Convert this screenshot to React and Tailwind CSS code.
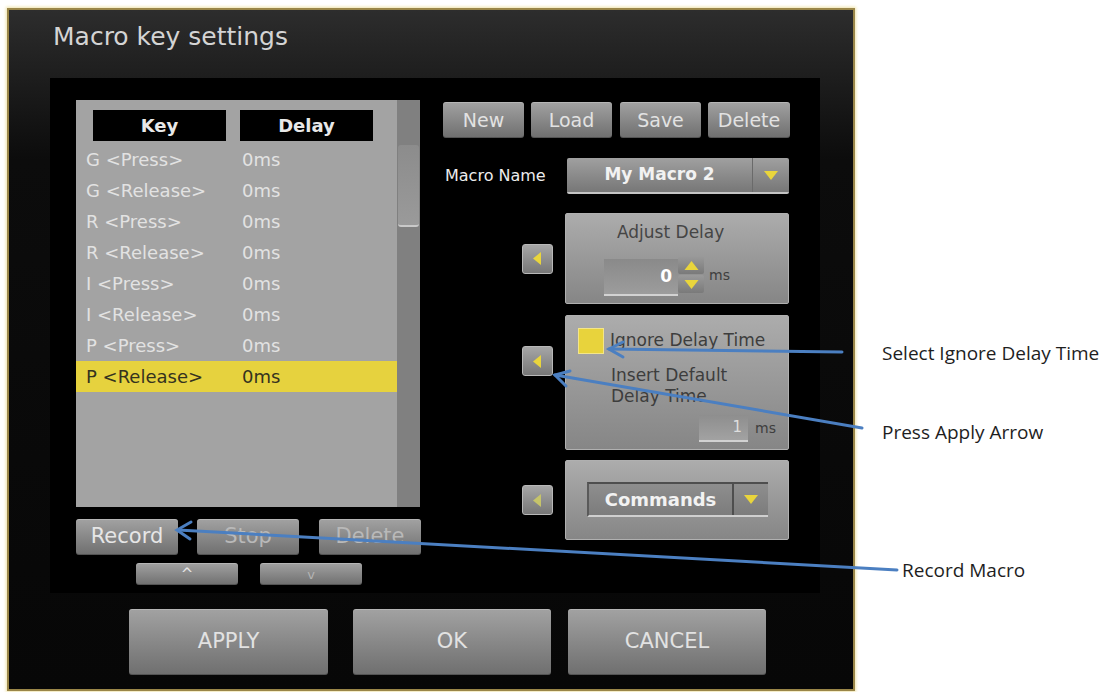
import React from "react";

const btn =
  "flex items-center justify-center rounded-[3px] bg-linear-to-b from-[#a2a2a2] to-[#6f6f6f] shadow-[inset_0_1px_0_rgba(255,255,255,0.22),inset_0_-1px_0_rgba(0,0,0,0.25)]";
const panel =
  "rounded-[2px] border border-[#b0b0b0] bg-linear-to-b from-[#acacac] to-[#868686]";

function TriLeft({ color = "#e9d53c" }) {
  return (
    <svg width="9" height="13" viewBox="0 0 9 13">
      <polygon points="8,0 8,13 0,6.5" fill={color} />
    </svg>
  );
}
function TriDown({ w = 14, h = 9 }) {
  return (
    <svg width={w} height={h} viewBox="0 0 14 9">
      <polygon points="0,0 14,0 7,9" fill="#e9d53c" />
    </svg>
  );
}
function TriUp({ w = 14, h = 9 }) {
  return (
    <svg width={w} height={h} viewBox="0 0 14 9">
      <polygon points="0,9 14,9 7,0" fill="#e9d53c" />
    </svg>
  );
}

function ArrowBtn({ dim, className = "" }) {
  return (
    <div
      className={`flex h-[30px] w-[31px] shrink-0 items-center justify-center rounded-[3px] border border-[#b8b8b8] bg-linear-to-b from-[#a6a6a6] to-[#777777] ${className}`}
    >
      <TriLeft color={dim ? "#c6c46a" : "#e9d53c"} />
    </div>
  );
}

const rows = [
  "G <Press>",
  "G <Release>",
  "R <Press>",
  "R <Release>",
  "I <Press>",
  "I <Release>",
  "P <Press>",
  "P <Release>",
];

export default function App() {
  return (
    <div className="relative flex h-[692px] w-[1112px] items-start overflow-hidden bg-white font-['DejaVu_Sans',sans-serif]">
      {/* Window */}
      <div className="ml-[7px] mt-[8px] flex h-[683px] w-[848px] shrink-0 flex-col border-2 border-[#9a8648] bg-linear-to-b from-[#2d2d2d] via-[#0c0c0c] via-[22%] to-[#070707] shadow-[0_0_3px_1px_#efe3a8]">
        <div className="h-[68px] shrink-0 pl-[44px] pt-[12px] text-[25px] leading-[30px] text-[#d4d4d4]">
          Macro key settings
        </div>

        {/* Black panel */}
        <div className="ml-[41px] flex h-[515px] w-[770px] shrink-0 bg-black">
          {/* Left column */}
          <div className="w-[371px] shrink-0 pl-[26px] pt-[22px]">
            <div className="flex h-[407px] w-[344px] bg-[#a3a3a3]">
              <div className="w-[321px] pt-[10px]">
                <div className="flex pl-[17px]">
                  <div className="flex h-[31px] w-[133px] items-center justify-center bg-black text-[18px] font-bold text-[#e8e8e8]">
                    Key
                  </div>
                  <div className="ml-[14px] flex h-[31px] w-[133px] items-center justify-center bg-black text-[18px] font-bold text-[#e8e8e8]">
                    Delay
                  </div>
                </div>
                <div className="mt-[3px]">
                  {rows.map((r, i) => {
                    const sel = i === rows.length - 1;
                    return (
                      <div
                        key={i}
                        className={`flex h-[31px] items-center text-[18px] ${
                          sel ? "bg-[#e6d23e] text-[#35331f]" : "text-[#e2e2e2]"
                        }`}
                      >
                        <span className="w-[166px] pl-[10px]">{r}</span>
                        <span>0ms</span>
                      </div>
                    );
                  })}
                </div>
              </div>
              <div className="w-[23px] bg-[#808080] px-[1px] pt-[45px]">
                <div className="h-[82px] rounded-[3px] border-b-2 border-[#c9c9c9] bg-linear-to-b from-[#8c8c8c] to-[#9a9a9a]" />
              </div>
            </div>

            <div className="mt-[12px] flex">
              <div className={`${btn} h-[36px] w-[102px] text-[21px] text-[#e6e6e6]`}>Record</div>
              <div className={`${btn} ml-[19px] h-[36px] w-[102px] text-[21px] text-[#b9b9b9]`}>Stop</div>
              <div className={`${btn} ml-[20px] h-[36px] w-[102px] text-[21px] text-[#b9b9b9]`}>Delete</div>
            </div>
            <div className="mt-[8px] flex pl-[60px]">
              <div className={`${btn} h-[22px] w-[102px] text-[15px] leading-none text-[#e6e6e6]`}>^</div>
              <div className={`${btn} ml-[22px] h-[22px] w-[102px] text-[13px] leading-none text-[#b4b4b4]`}>v</div>
            </div>
          </div>

          {/* Right column */}
          <div className="ml-[22px] w-[347px] shrink-0 pt-[24px]">
            <div className="flex">
              <div className={`${btn} h-[36px] w-[81px] text-[19px] text-[#e2e2e2]`}>New</div>
              <div className={`${btn} ml-[7px] h-[36px] w-[81px] text-[19px] text-[#e2e2e2]`}>Load</div>
              <div className={`${btn} ml-[8px] h-[36px] w-[81px] text-[19px] text-[#e2e2e2]`}>Save</div>
              <div className={`${btn} ml-[7px] h-[36px] w-[82px] text-[19px] text-[#e2e2e2]`}>Delete</div>
            </div>

            <div className="mt-[20px] flex h-[36px] items-center">
              <div className="w-[124px] shrink-0 pl-[2px] text-[16px] text-[#ececec]">Macro Name</div>
              <div className="flex h-[36px] w-[222px] shrink-0 rounded-[2px] border-b-2 border-[#c4c4c4] bg-linear-to-b from-[#a0a0a0] to-[#777777]">
                <div className="flex w-[185px] items-center justify-center text-[17px] font-bold text-[#f2f2f2]">
                  My Macro 2
                </div>
                <div className="w-px bg-[#6a6a6a]" />
                <div className="flex flex-1 items-center justify-center">
                  <TriDown w={14} h={9} />
                </div>
              </div>
            </div>

            {/* Adjust delay */}
            <div className="mt-[19px] flex items-center pl-[79px]">
              <ArrowBtn />
              <div className={`${panel} ml-[12px] h-[91px] w-[224px] shrink-0 pt-[8px]`}>
                <div className="pl-[51px] text-[17px] leading-[20px] text-[#454545]">Adjust Delay</div>
                <div className="mt-[14px] flex items-start pl-[38px]">
                  <div className="mt-[3px] flex h-[37px] w-[74px] items-center justify-end border-b-2 border-[#d2d2d2] bg-linear-to-b from-[#8a8a8a] to-[#9c9c9c] pr-[6px] text-[17px] font-bold text-white">
                    0
                  </div>
                  <div className="flex h-[37px] w-[26px] flex-col gap-[1px]">
                    <div className="flex h-[18px] items-center justify-center rounded-[2px] bg-linear-to-b from-[#9a9a9a] to-[#7a7a7a]">
                      <TriUp w={15} h={9} />
                    </div>
                    <div className="flex h-[18px] items-center justify-center rounded-[2px] bg-linear-to-b from-[#9a9a9a] to-[#7a7a7a]">
                      <TriDown w={15} h={9} />
                    </div>
                  </div>
                  <div className="ml-[5px] mt-[9px] text-[14px] text-[#3e3e3e]">ms</div>
                </div>
              </div>
            </div>

            {/* Ignore delay */}
            <div className="mt-[11px] flex items-start pl-[79px]">
              <ArrowBtn className="mt-[31px]" />
              <div className={`${panel} ml-[12px] h-[135px] w-[224px] shrink-0 pl-[12px] pt-[12px]`}>
                <div className="flex items-center">
                  <div className="h-[26px] w-[26px] border border-[#f3e58a] bg-[#e8d33c]" />
                  <div className="ml-[6px] text-[17px] text-[#3d3d3d]">Ignore Delay Time</div>
                </div>
                <div className="mt-[11px] pl-[33px] text-[17px] leading-[21px] text-[#3d3d3d]">
                  Insert Default
                  <br />
                  Delay Time
                </div>
                <div className="mt-[8px] flex items-center pl-[121px]">
                  <div className="flex h-[27px] w-[49px] items-center justify-end border-b-2 border-[#d2d2d2] bg-linear-to-b from-[#8e8e8e] to-[#a2a2a2] pr-[6px] text-[15px] text-[#dedede]">
                    1
                  </div>
                  <div className="ml-[7px] text-[14px] text-[#3e3e3e]">ms</div>
                </div>
              </div>
            </div>

            {/* Commands */}
            <div className="mt-[10px] flex items-center pl-[79px]">
              <ArrowBtn dim />
              <div className={`${panel} ml-[12px] h-[80px] w-[224px] shrink-0 pl-[21px] pt-[21px]`}>
                <div className="flex h-[35px] w-[181px] border-b-2 border-l-2 border-t-2 border-b-[#cfcfcf] border-l-[#5a5a5a] border-t-[#4e4e4e] bg-linear-to-b from-[#8e8e8e] to-[#7c7c7c]">
                  <div className="flex w-[143px] items-center justify-center text-[18px] font-bold text-[#f2f2f2]">
                    Commands
                  </div>
                  <div className="w-[2px] bg-[#4e4e4e]" />
                  <div className="flex flex-1 items-center justify-center">
                    <TriDown w={14} h={9} />
                  </div>
                </div>
              </div>
            </div>
          </div>
        </div>

        {/* Bottom buttons */}
        <div className="mt-[16px] flex pl-[120px]">
          <div className={`${btn} h-[66px] w-[199px] text-[21px] text-[#e2e2e2]`}>APPLY</div>
          <div className={`${btn} ml-[25px] h-[66px] w-[198px] text-[21px] text-[#e2e2e2]`}>OK</div>
          <div className={`${btn} ml-[17px] h-[66px] w-[198px] text-[21px] text-[#e2e2e2]`}>CANCEL</div>
        </div>
      </div>

      {/* Annotation labels */}
      <div className="ml-[27px] flex flex-col pt-[340px] font-['Open_Sans',sans-serif] text-[19px] leading-[26px] text-[#1e1e1e]">
        <div className="whitespace-nowrap">Select Ignore Delay Time</div>
        <div className="mt-[53px] whitespace-nowrap">Press Apply Arrow</div>
        <div className="ml-[20px] mt-[112px] whitespace-nowrap">Record Macro</div>
      </div>

      {/* Annotation arrows */}
      <svg
        className="pointer-events-none absolute left-0 top-0"
        width="1112"
        height="692"
        viewBox="0 0 1112 692"
      >
        <g stroke="#4b7fc1" strokeWidth="3" strokeLinecap="round" fill="none">
          <line x1="842" y1="352" x2="609" y2="349" />
          <polyline points="623,342 609,349 623,357" />
          <line x1="862" y1="428" x2="555" y2="375" />
          <polyline points="570,371 555,375 566,386" />
          <line x1="897" y1="570" x2="178" y2="530" />
          <polyline points="191,522 177,530 190,539" />
        </g>
      </svg>
    </div>
  );
}
